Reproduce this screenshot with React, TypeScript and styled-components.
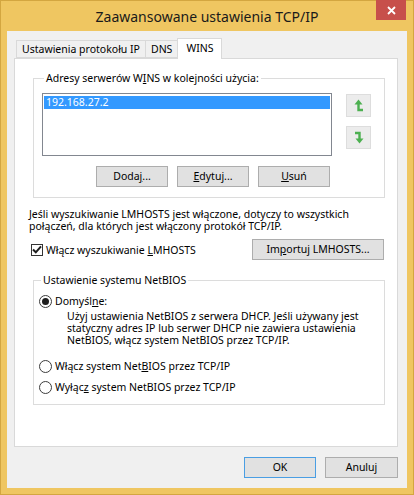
import React from "react";
import styled, { createGlobalStyle } from "styled-components";

const Global = createGlobalStyle`
  html, body { margin: 0; padding: 0; background: #efc661; }
  body { font-family: "Noto Sans", "Open Sans", sans-serif; font-size: 10.5px; color: #000; }
  * { box-sizing: border-box; }
`;

const Window = styled.div`
  width: 414px;
  height: 495px;
  background: #efc661;
  border: 1px solid #d3a640;
  padding: 0 6px 6px 6px;
  display: flex;
  flex-direction: column;
`;

const TitleBar = styled.div`
  height: 30px;
  display: grid;
  grid-template-columns: 1fr auto 1fr;
  align-items: start;
`;

const Title = styled.div`
  grid-column: 2;
  font-size: 14px;
  line-height: 31px;
  color: #1a1a1a;
  white-space: nowrap;
`;

const CloseButton = styled.div`
  grid-column: 3;
  justify-self: end;
  margin-top: -1px;
  margin-right: 1px;
  width: 30px;
  height: 20px;
  background: #c7504b;
  display: flex;
  align-items: center;
  justify-content: center;
`;

const Client = styled.div`
  flex: 1;
  background: #f0f0f0;
  padding: 7px 9px 10px 7px;
  display: flex;
  flex-direction: column;
`;

const TabStrip = styled.div`
  display: flex;
  align-items: flex-end;
  height: 20px;
  padding-left: 2px;
  position: relative;
  z-index: 1;
`;

const Tab = styled.div<{ $active?: boolean }>`
  height: ${(p) => (p.$active ? "21px" : "18px")};
  margin-bottom: ${(p) => (p.$active ? "-1px" : "0")};
  margin-left: -1px;
  padding: 0 ${(p) => (p.$active ? "8px" : "5px")};
  background: ${(p) => (p.$active ? "#fff" : "#f0f0f0")};
  border: 1px solid #d9d9d9;
  border-bottom: ${(p) => (p.$active ? "none" : "1px solid #d9d9d9")};
  line-height: ${(p) => (p.$active ? "18px" : "16px")};
  white-space: nowrap;
  &:first-child { margin-left: 0; }
`;

const Panel = styled.div`
  flex: 1;
  background: #fff;
  border: 1px solid #d9d9d9;
  padding: 13px 12px 0 14px;
  display: flex;
  flex-direction: column;
`;

const Group = styled.fieldset<{ $pad: string }>`
  margin: 0 0 0 4px;
  min-width: 0;
  border: 1px solid #dcdcdc;
  padding: ${(p) => p.$pad};
`;

const Legend = styled.legend`
  margin-left: 2px;
  padding: 0 2px;
  line-height: 13px;
  color: #000;
`;

const ListRow = styled.div`
  display: flex;
  align-items: flex-start;
  gap: 14px;
`;

const ListBox = styled.div`
  width: 290px;
  height: 63px;
  border: 1px solid #828790;
  background: #fff;
  padding: 2px 1px;
`;

const ListItem = styled.div<{ $selected?: boolean }>`
  height: 13px;
  line-height: 13px;
  padding-left: 2px;
  background: ${(p) => (p.$selected ? "#3399ff" : "transparent")};
  color: ${(p) => (p.$selected ? "#fff" : "#000")};
`;

const ArrowColumn = styled.div`
  display: flex;
  flex-direction: column;
  gap: 9px;
  margin-top: 1px;
`;

const ArrowButton = styled.div`
  width: 25px;
  height: 23px;
  background: #ececec;
  border: 1px solid #dddddd;
  display: flex;
  align-items: center;
  justify-content: center;
`;

const ButtonRow = styled.div`
  width: 288px;
  display: flex;
  justify-content: flex-end;
  gap: 9px;
  margin-top: 10px;
`;

const Button = styled.div<{ $default?: boolean; $width?: number }>`
  width: ${(p) => p.$width ?? 72}px;
  height: 21px;
  background: #e1e1e1;
  border: 1px solid ${(p) => (p.$default ? "#4a9ee3" : "#adadad")};
  display: flex;
  align-items: center;
  justify-content: center;
  line-height: 13px;
  white-space: nowrap;
`;

const Key = styled.span`
  text-decoration: underline;
  text-underline-offset: 1px;
`;

const Para = styled.p`
  margin: 10px 0 0 0;
  line-height: 12px;
`;

const CheckRow = styled.div`
  display: flex;
  align-items: center;
  justify-content: space-between;
  margin-top: 7px;
  margin-right: 1px;
`;

const CheckLabel = styled.label`
  display: flex;
  align-items: center;
  gap: 3px;
  margin-left: 2px;
`;

const CheckBox = styled.span`
  width: 12px;
  height: 12px;
  border: 1px solid #333;
  background: #fff;
  display: flex;
  align-items: center;
  justify-content: center;
`;

const NetGroupWrap = styled.div`
  margin-top: 14px;
  display: flex;
  flex-direction: column;
`;

const RadioRow = styled.label<{ $mt?: number }>`
  display: flex;
  align-items: center;
  gap: 3px;
  height: 13px;
  line-height: 13px;
  margin-top: ${(p) => p.$mt ?? 0}px;
`;

const Radio = styled.span<{ $checked?: boolean }>`
  width: 13px;
  height: 13px;
  border-radius: 50%;
  border: 1px solid #3c3c3c;
  background: #fff;
  display: flex;
  align-items: center;
  justify-content: center;
  &::after {
    content: "";
    display: ${(p) => (p.$checked ? "block" : "none")};
    width: 7px;
    height: 7px;
    border-radius: 50%;
    background: #1e1e1e;
  }
`;

const Description = styled.p`
  margin: 2px 0 0 28px;
  line-height: 12px;
`;

const Footer = styled.div`
  display: flex;
  justify-content: flex-end;
  gap: 9px;
  padding-top: 10px;
`;

const UpIcon = () => (
  <svg width="10" height="13" viewBox="0 0 10 13">
    <polygon points="0.5,5.5 4.5,0.5 8.5,5.5" fill="#4cb050" />
    <path d="M4.5 5 V11 H9" fill="none" stroke="#4cb050" strokeWidth="2.4" />
  </svg>
);

const DownIcon = () => (
  <svg width="10" height="13" viewBox="0 0 10 13" style={{ transform: "rotate(180deg)" }}>
    <polygon points="0.5,5.5 4.5,0.5 8.5,5.5" fill="#4cb050" />
    <path d="M4.5 5 V11 H9" fill="none" stroke="#4cb050" strokeWidth="2.4" />
  </svg>
);

export default function App() {
  return (
    <>
      <Global />
      <Window>
        <TitleBar>
          <Title>Zaawansowane ustawienia TCP/IP</Title>
          <CloseButton>
            <svg width="9" height="9" viewBox="0 0 9 9">
              <path d="M1 1 L8 8 M8 1 L1 8" stroke="#fff" strokeWidth="1.8" />
            </svg>
          </CloseButton>
        </TitleBar>
        <Client>
          <TabStrip>
            <Tab>Ustawienia protokołu IP</Tab>
            <Tab>DNS</Tab>
            <Tab $active>WINS</Tab>
          </TabStrip>
          <Panel>
            <Group $pad="8px 13px 10px 8px">
              <Legend>
                Adresy serwerów W<Key>I</Key>NS w kolejności użycia:
              </Legend>
              <ListRow>
                <ListBox>
                  <ListItem $selected>192.168.27.2</ListItem>
                </ListBox>
                <ArrowColumn>
                  <ArrowButton>
                    <UpIcon />
                  </ArrowButton>
                  <ArrowButton>
                    <DownIcon />
                  </ArrowButton>
                </ArrowColumn>
              </ListRow>
              <ButtonRow>
                <Button>
                  <span>
                    Doda<Key>j</Key>...
                  </span>
                </Button>
                <Button>
                  <span>
                    <Key>E</Key>dytuj...
                  </span>
                </Button>
                <Button>
                  <span>
                    <Key>U</Key>suń
                  </span>
                </Button>
              </ButtonRow>
            </Group>
            <Para>
              Jeśli wyszukiwanie LMHOSTS jest włączone, dotyczy to wszystkich
              <br />
              połączeń, dla których jest włączony protokół TCP/IP.
            </Para>
            <CheckRow>
              <CheckLabel>
                <CheckBox>
                  <svg width="10" height="9" viewBox="0 0 10 9">
                    <path d="M1 4.5 L3.8 7.3 L9 1.3" fill="none" stroke="#1e1e1e" strokeWidth="2" />
                  </svg>
                </CheckBox>
                <span>
                  Włącz wyszukiwanie <Key>L</Key>MHOSTS
                </span>
              </CheckLabel>
              <Button $width={132}>
                <span>
                  Im<Key>p</Key>ortuj LMHOSTS...
                </span>
              </Button>
            </CheckRow>
            <NetGroupWrap>
              <Group $pad="8px 10px 10px 5px">
                <Legend>Ustawienie systemu NetBIOS</Legend>
                <RadioRow>
                  <Radio $checked />
                  <span>
                    Domyśl<Key>n</Key>e:
                  </span>
                </RadioRow>
                <Description>
                  Użyj ustawienia NetBIOS z serwera DHCP. Jeśli używany jest
                  <br />
                  statyczny adres IP lub serwer DHCP nie zawiera ustawienia
                  <br />
                  NetBIOS, włącz system NetBIOS przez TCP/IP.
                </Description>
                <RadioRow $mt={14}>
                  <Radio />
                  <span>
                    Włącz system Net<Key>B</Key>IOS przez TCP/IP
                  </span>
                </RadioRow>
                <RadioRow $mt={8}>
                  <Radio />
                  <span>
                    Wyłąc<Key>z</Key> system NetBIOS przez TCP/IP
                  </span>
                </RadioRow>
              </Group>
            </NetGroupWrap>
          </Panel>
          <Footer>
            <Button $default>OK</Button>
            <Button $width={73}>Anuluj</Button>
          </Footer>
        </Client>
      </Window>
    </>
  );
}
